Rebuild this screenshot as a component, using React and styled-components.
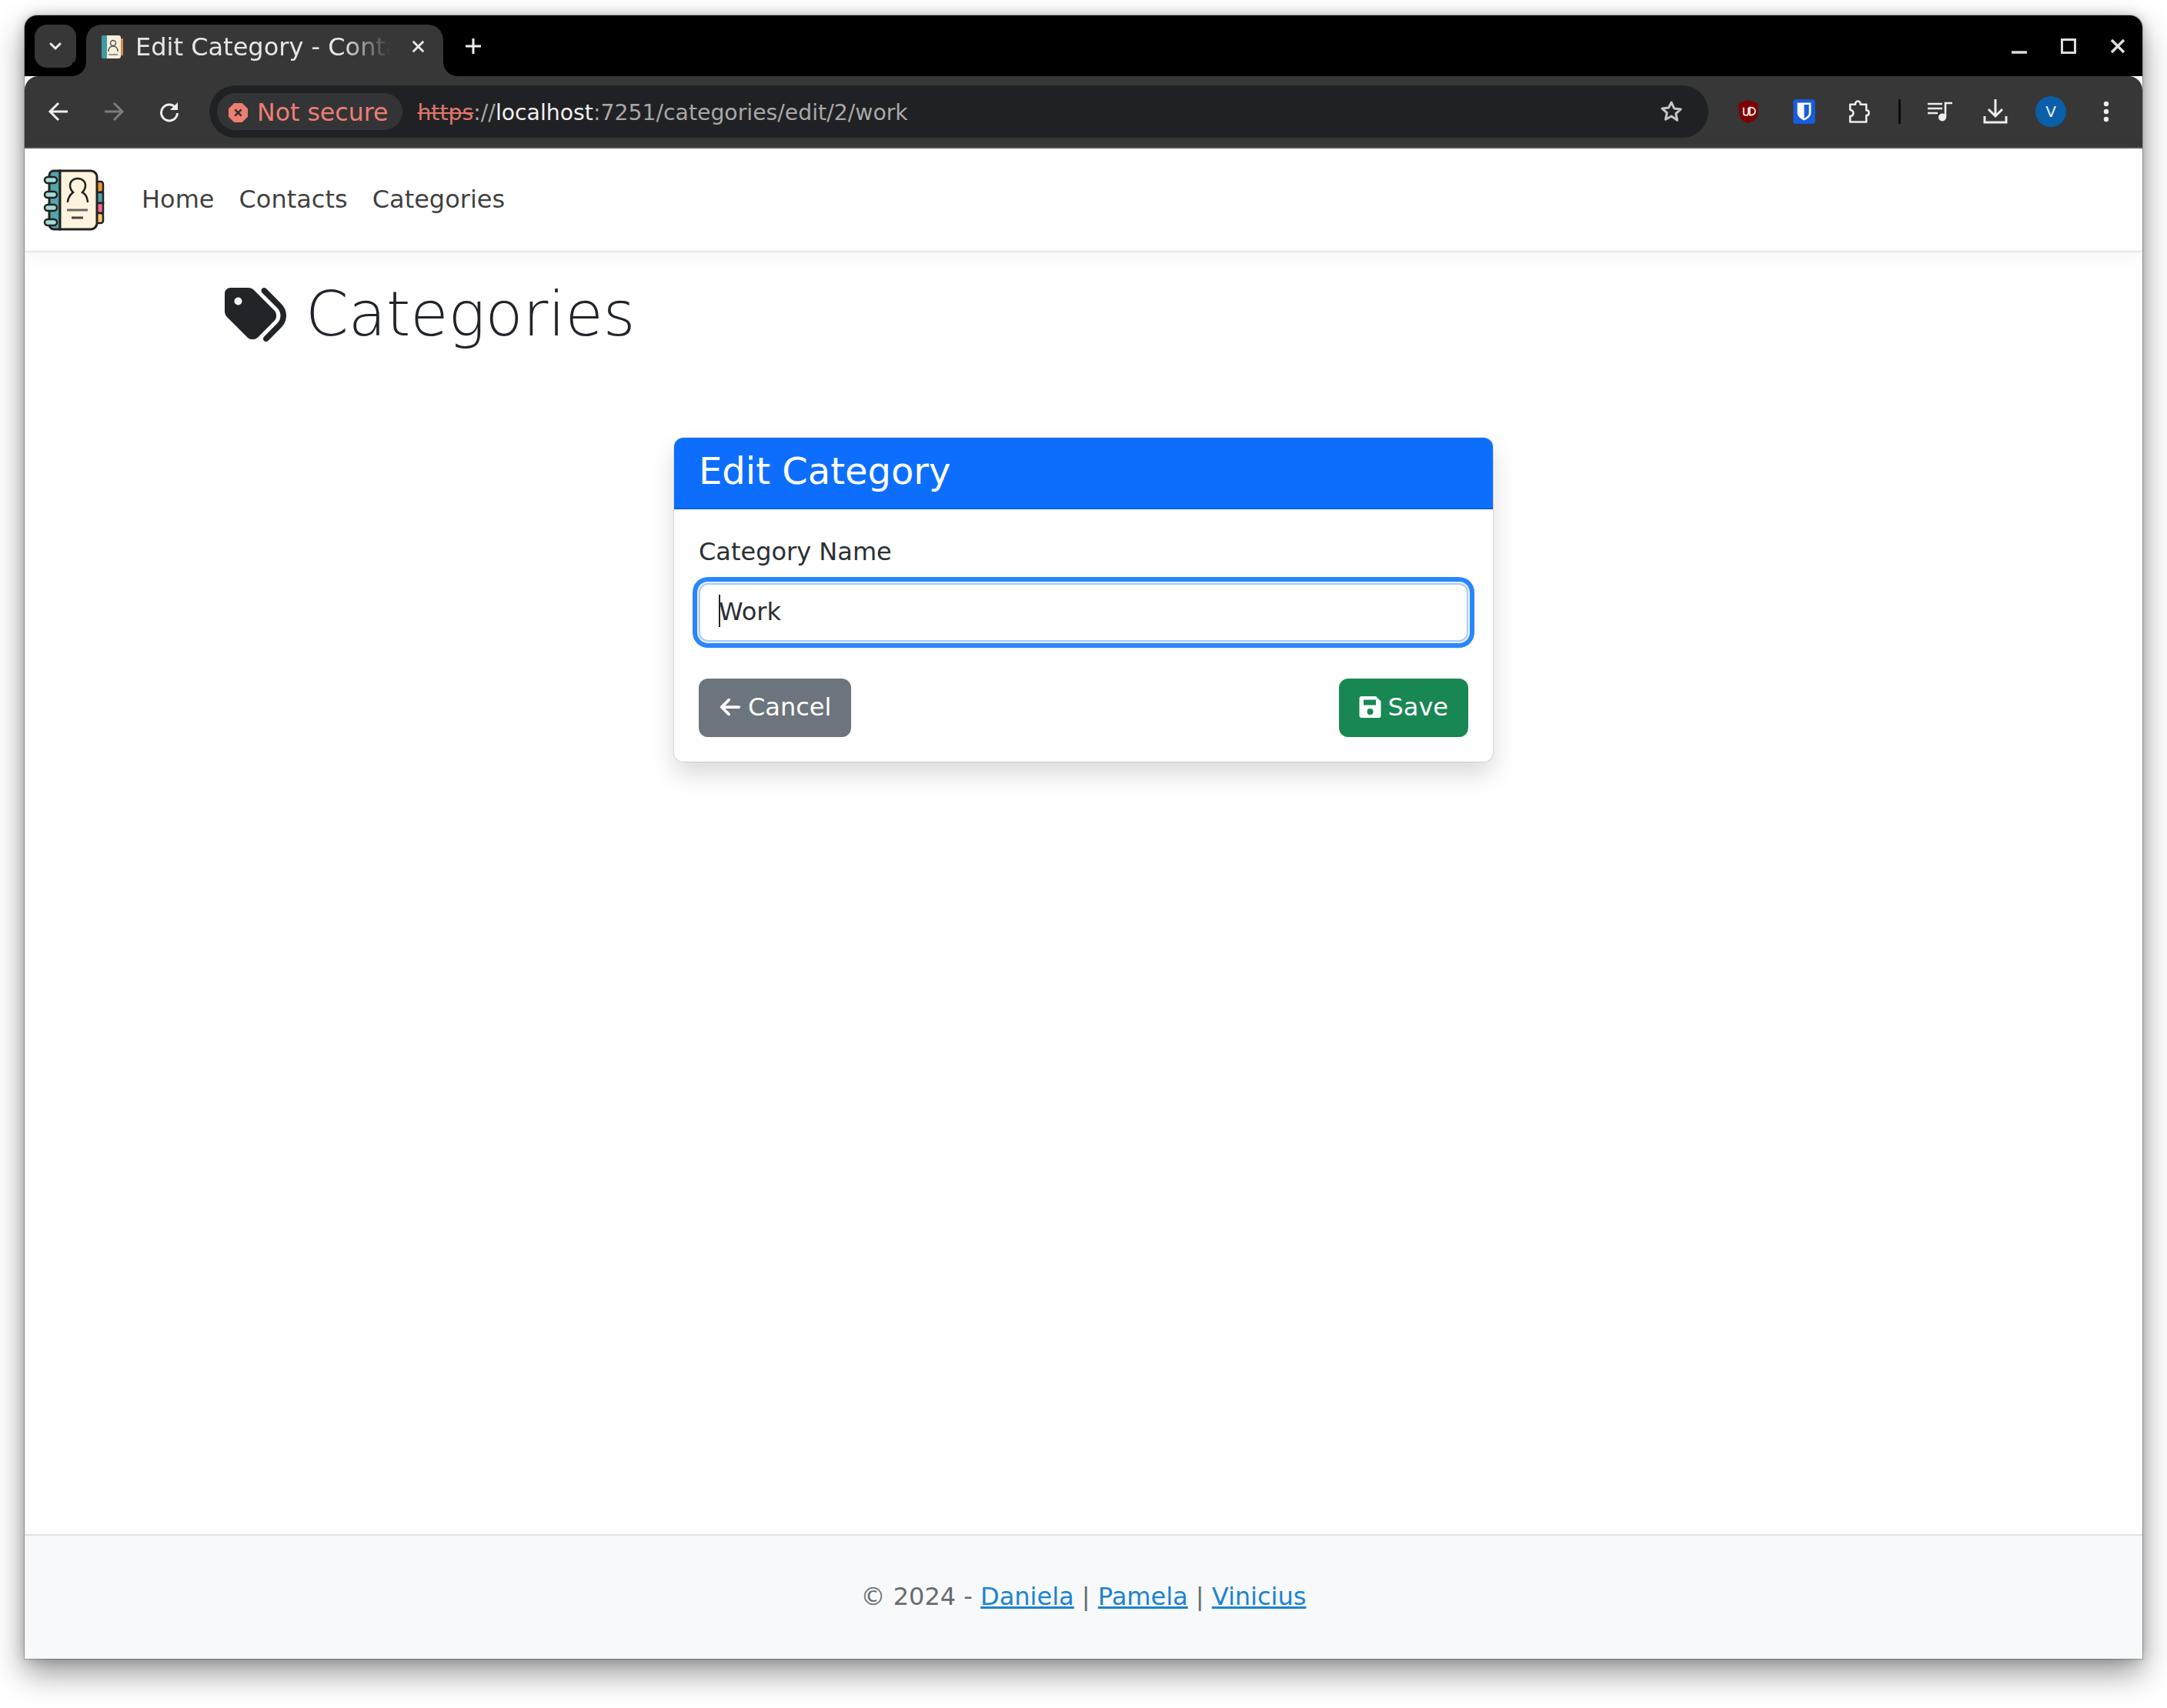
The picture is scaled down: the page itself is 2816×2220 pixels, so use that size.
import React from 'react';
import styled, { createGlobalStyle } from 'styled-components';
import { FaArrowLeft, FaTags } from 'react-icons/fa6';

const GlobalStyle = createGlobalStyle`
  html, body {
    margin: 0;
    padding: 0;
    background: #fff;
  }
  * {
    box-sizing: border-box;
  }
`;

const Desktop = styled.div`
  width: 2816px;
  height: 2220px;
  padding: 20px 32px 64px;
  font-family: "DejaVu Sans", sans-serif;
  background: #fff;
`;

const Window = styled.div`
  height: 100%;
  display: flex;
  flex-direction: column;
  border-radius: 16px 16px 0 0;
  background: #fff;
  box-shadow: 0 0 0 1px rgba(0, 0, 0, 0.22), 0 18px 40px rgba(0, 0, 0, 0.42), 0 0 16px rgba(0, 0, 0, 0.2);
  overflow: hidden;
`;

const TitleBar = styled.div`
  height: 79px;
  flex: none;
  display: flex;
  align-items: flex-start;
  padding: 12px 0 0 13px;
  background: #000;
`;

const TabSearch = styled.div`
  width: 54px;
  height: 56px;
  border-radius: 16px;
  background: #373737;
  display: flex;
  align-items: center;
  justify-content: center;
`;

const Tab = styled.div`
  position: relative;
  width: 464px;
  height: 67px;
  margin-left: 13px;
  padding: 0 24px 10px 18px;
  display: flex;
  align-items: center;
  border-radius: 20px 20px 0 0;
  background: #373737;
  color: #e6e6e6;
  font-size: 32px;

  &::before,
  &::after {
    content: '';
    position: absolute;
    bottom: 0;
    width: 18px;
    height: 18px;
    background: radial-gradient(circle at var(--cx) 0, #000 17.5px, #373737 18px);
  }
  &::before {
    left: -18px;
    --cx: 0;
  }
  &::after {
    right: -18px;
    --cx: 100%;
  }
`;

const TabTitle = styled.span`
  flex: 1;
  min-width: 0;
  margin: 0 13px 0 16px;
  overflow: hidden;
  white-space: nowrap;
  -webkit-mask-image: linear-gradient(to right, #000 78%, transparent 96%);
  mask-image: linear-gradient(to right, #000 78%, transparent 96%);
`;

const NewTab = styled.div`
  margin: 4px 0 0 15px;
  width: 48px;
  height: 48px;
  display: flex;
  align-items: center;
  justify-content: center;
`;

const WindowControls = styled.div`
  margin-left: auto;
  margin-top: 8px;
  padding-right: 12px;
  display: flex;
  gap: 24px;
`;

const Toolbar = styled.div`
  height: 94px;
  flex: none;
  display: flex;
  align-items: center;
  padding: 0 20px 0 24px;
  background: #373737;
  border-radius: 18px 18px 0 0;
  border-bottom: 2px solid #555;
`;

const NavButton = styled.div`
  width: 40px;
  height: 40px;
  margin-right: 32px;
  display: flex;
  align-items: center;
  justify-content: center;
`;

const Omnibox = styled.div`
  width: 1948px;
  height: 68px;
  flex: none;
  padding: 0 33px 0 10px;
  display: flex;
  align-items: center;
  border-radius: 34px;
  background: #202124;
`;

const SecurityChip = styled.div`
  height: 48px;
  padding: 2px 19px 0 15px;
  display: flex;
  align-items: center;
  gap: 12px;
  border-radius: 24px;
  background: #333436;
  color: #ee7d72;
  font-size: 31.6px;
`;

const Url = styled.div`
  margin: 2px 0 0 19px;
  flex: 1;
  font-size: 28.3px;
  color: #a8a8a8;
  white-space: nowrap;
`;

const UrlScheme = styled.span`
  color: #e0766c;
  text-decoration: line-through;
`;

const UrlHost = styled.span`
  color: #f0f0f0;
`;

const ToolIcons = styled.div`
  display: flex;
  align-items: center;
  margin-left: 32px;
  gap: 32px;
`;

const ToolIcon = styled.div`
  width: 40px;
  height: 40px;
  display: flex;
  align-items: center;
  justify-content: center;
`;

const ToolDivider = styled.div`
  width: 3px;
  height: 32px;
  margin: 0 -1px;
  background: #0c0c0c;
`;

const Avatar = styled.div`
  width: 40px;
  height: 40px;
  border-radius: 50%;
  background: #0b5ea8;
  color: #e8eef6;
  font-size: 20px;
  display: flex;
  align-items: center;
  justify-content: center;
`;

const Page = styled.div`
  flex: 1;
  min-height: 0;
  display: flex;
  flex-direction: column;
  background: #fff;
  color: #212529;
`;

const Navbar = styled.nav`
  height: 135px;
  flex: none;
  display: flex;
  align-items: center;
  padding: 0 24px;
  border-bottom: 2px solid #e6e9ec;
  box-shadow: 0 4px 24px rgba(0, 0, 0, 0.05);
`;

const Brand = styled.div`
  width: 80px;
  height: 80px;
  margin-right: 32px;
  flex: none;
`;

const NavLink = styled.a`
  padding: 15px 16px 17px;
  font-size: 32px;
  line-height: 48px;
  color: rgba(0, 0, 0, 0.75);
`;

const Main = styled.main`
  flex: 1;
  min-height: 0;
`;

const PageHeading = styled.h1`
  margin: 0;
  padding: 37px 0 0 260px;
  display: flex;
  align-items: center;
  gap: 25px;
  font-size: 80px;
  line-height: 88px;
  font-weight: 200;
  color: #212529;
`;

const Card = styled.section`
  width: 1064px;
  margin: 116px auto 0;
  border-radius: 12px;
  background: #fff;
  box-shadow: 0 0 0 1px rgba(0, 0, 0, 0.1), 0 16px 32px rgba(0, 0, 0, 0.15);
  overflow: hidden;
`;

const CardHeader = styled.h4`
  margin: 0;
  padding: 15px 32px 19px;
  font-size: 48px;
  line-height: 57px;
  font-weight: 400;
  color: #fff;
  background: #0d6efd;
  border-bottom: 2px solid rgba(0, 0, 0, 0.125);
`;

const CardBody = styled.div`
  padding: 32px;
`;

const FieldLabel = styled.label`
  display: block;
  margin: -1px 0 17px;
  font-size: 32px;
  line-height: 48px;
  color: #2b2f33;
`;

const Input = styled.div`
  position: relative;
  height: 76px;
  padding: 11px 24px 13px;
  font-size: 32px;
  line-height: 48px;
  color: #2b2f33;
  border: 2px solid #a8cbff;
  border-radius: 12px;
  background: #fff;
  box-shadow: 0 0 0 2px #e6f0ff, 0 0 0 8px #2a86fb;
`;

const Caret = styled.span`
  position: absolute;
  left: 24px;
  top: 13px;
  width: 2px;
  height: 42px;
  background: #212529;
`;

const Actions = styled.div`
  display: flex;
  justify-content: space-between;
  margin-top: 48px;
`;

const Button = styled.button`
  height: 76px;
  padding: 11px 24px 13px;
  display: inline-flex;
  align-items: center;
  gap: 8px;
  border: 2px solid ${({ $bg }) => $bg};
  border-radius: 12px;
  background: ${({ $bg }) => $bg};
  color: #fff;
  font-family: inherit;
  font-size: 32px;
  line-height: 48px;
`;

const Footer = styled.footer`
  height: 162px;
  flex: none;
  display: flex;
  align-items: center;
  justify-content: center;
  padding-bottom: 2px;
  border-top: 2px solid #dee2e6;
  background: #f8f9fa;
  color: #686c70;
  font-size: 32px;
`;

const FooterLink = styled.a`
  color: #1b83d6;
  text-decoration: underline;
`;

const ContactBook = () => (
  <svg viewBox="0 0 80 80" width="100%" height="100%">
    <rect x="68" y="16" width="10" height="14" rx="3" fill="#f2963f" stroke="#222" strokeWidth="2.5" />
    <rect x="68" y="30" width="10" height="14" fill="#4fa0a8" stroke="#222" strokeWidth="2.5" />
    <rect x="68" y="44" width="10" height="13" fill="#ef6b8e" stroke="#222" strokeWidth="2.5" />
    <rect x="68" y="57" width="10" height="13" rx="3" fill="#f7c667" stroke="#222" strokeWidth="2.5" />
    <path d="M14 2h8v76h-8a6 6 0 0 1-6-6V8a6 6 0 0 1 6-6z" fill="#55a3ab" stroke="#222" strokeWidth="3" />
    <path d="M22 2h40a8 8 0 0 1 8 8v60a8 8 0 0 1-8 8H22z" fill="#fdf3df" stroke="#222" strokeWidth="3" />
    {[14, 33, 50, 69].map(y => (
      <rect key={y} x="2" y={y - 4} width="16" height="8" rx="4" fill="#a5dcd8" stroke="#222" strokeWidth="2.5" />
    ))}
    <path d="M32 42c1-8 5-10 7-12-3-3-4-6-4-9 0-5 4-9 10-9s10 4 10 9c0 3-1 6-4 9 3 2 6 4 7 12" fill="none" stroke="#222" strokeWidth="2.5" strokeLinecap="round" />
    <path d="M31 53h27" stroke="#666" strokeWidth="3" />
    <path d="M37 63h15" stroke="#444" strokeWidth="3" />
  </svg>
);

const Favicon = () => (
  <svg width="30" height="32" viewBox="0 0 30 32">
    <rect x="7" y="1" width="20" height="30" rx="3" fill="#f7efdd" />
    <rect x="2" y="1" width="7" height="30" rx="2" fill="#3f9aa2" />
    <rect x="27" y="5" width="3" height="22" fill="#d98a4a" />
    <circle cx="17" cy="11" r="3.5" fill="none" stroke="#555" strokeWidth="1.5" />
    <path d="M11 22c0-5 3-7 6-7s6 2 6 7" fill="none" stroke="#555" strokeWidth="1.5" />
    <path d="M11 26h12" stroke="#777" strokeWidth="1.5" />
  </svg>
);

const Chevron = () => (
  <svg width="20" height="14" viewBox="0 0 20 14">
    <path d="M4 4l6 6 6-6" fill="none" stroke="#f0f0f0" strokeWidth="3" strokeLinecap="round" />
  </svg>
);

const CloseGlyph = ({ size = 20, color = '#e6e6e6' }) => (
  <svg width={size} height={size} viewBox="0 0 20 20">
    <path d="M2 2l16 16M18 2L2 18" stroke={color} strokeWidth="3.4" />
  </svg>
);

const Arrow = ({ color = '#eee', flip }) => (
  <svg width="28" height="28" viewBox="0 0 28 28" style={flip ? { transform: 'scaleX(-1)' } : undefined}>
    <path d="M26 14H4M14 3L3 14l11 11" fill="none" stroke={color} strokeWidth="3" />
  </svg>
);

const Reload = () => (
  <svg width="28" height="28" viewBox="0 0 28 28">
    <path d="M23 10a10.5 10.5 0 1 0 1.5 6" fill="none" stroke="#eee" strokeWidth="3" />
    <path d="M25 2v10H15z" fill="#eee" />
  </svg>
);

const StarIcon = () => (
  <svg width="30" height="30" viewBox="0 0 30 30">
    <path d="M15 3l3.6 8 8.6.9-6.4 5.8 1.8 8.5L15 21l-7.6 4.2 1.8-8.5-6.4-5.8 8.6-.9z" fill="none" stroke="#c6c6c6" strokeWidth="3" strokeLinejoin="round" />
  </svg>
);

const UblockIcon = () => (
  <svg width="28" height="32" viewBox="0 0 30 36">
    <path d="M15 1l14 5v14c0 8-7 13-14 15C8 33 1 28 1 20V6z" fill="#800000" />
    <path d="M8 12v8a3.5 3.5 0 0 0 7 0v-8M17 12v11h2.5a5.5 5.5 0 0 0 0-11z" fill="none" stroke="#f2e4e4" strokeWidth="2.2" />
  </svg>
);

const BitwardenIcon = () => (
  <svg width="31" height="32" viewBox="0 0 32 36">
    <rect width="32" height="36" rx="4" fill="#175ddc" />
    <path d="M6 5h20v15c0 5-5 9-10 11C11 29 6 25 6 20z" fill="#fff" />
    <path d="M16 8h7v12c0 3-3 6-7 8z" fill="#175ddc" />
  </svg>
);

const PuzzleIcon = () => (
  <svg width="34" height="32" viewBox="0 0 34 38">
    <path d="M3 8h8c0-2 1-5 4-5s4 3 4 5h9v9c2 0 4 1 4 4s-2 4-4 4v10H3V26c3 0 5-2 5-5s-2-4-5-5z" fill="none" stroke="#eee" strokeWidth="3" strokeLinejoin="round" />
  </svg>
);

const MediaIcon = () => (
  <svg width="32" height="26" viewBox="0 0 32 26">
    <path d="M0 3h19M0 9h19M0 15h13" stroke="#eee" strokeWidth="2.6" />
    <path d="M23 20V2h9" fill="none" stroke="#eee" strokeWidth="2.6" />
    <circle cx="19" cy="20.5" r="5" fill="#eee" />
  </svg>
);

const DownloadIcon = () => (
  <svg width="32" height="32" viewBox="0 0 32 32">
    <path d="M16 0v21M7 13l9 9 9-9" fill="none" stroke="#eee" strokeWidth="3" />
    <path d="M2 22v8h28v-8" fill="none" stroke="#eee" strokeWidth="3" />
  </svg>
);

const MenuDots = () => (
  <svg width="8" height="28" viewBox="0 0 8 28">
    <circle cx="4" cy="4" r="3.2" fill="#eee" />
    <circle cx="4" cy="14" r="3.2" fill="#eee" />
    <circle cx="4" cy="24" r="3.2" fill="#eee" />
  </svg>
);

const FloppyIcon = () => (
  <svg width="29" height="28" viewBox="0 0 28 28">
    <path
      fillRule="evenodd"
      fill="#fff"
      d="M3 0h18.5L28 6.5V25a3 3 0 0 1-3 3H3a3 3 0 0 1-3-3V3a3 3 0 0 1 3-3zM5.5 4.5v7h16v-7zM14 16a4 4 0 1 0 0 8 4 4 0 0 0 0-8z"
    />
  </svg>
);

const App = () => (
  <>
    <GlobalStyle />
    <Desktop>
      <Window>
        <TitleBar>
          <TabSearch>
            <Chevron />
          </TabSearch>
          <Tab>
            <Favicon />
            <TabTitle>Edit Category - Contacts</TabTitle>
            <CloseGlyph size={17} />
          </Tab>
          <NewTab>
            <svg width="20" height="20" viewBox="0 0 20 20">
              <path d="M10 0v20M0 10h20" stroke="#f0f0f0" strokeWidth="3" />
            </svg>
          </NewTab>
          <WindowControls>
            <ToolIcon>
              <svg width="20" height="20" viewBox="0 0 20 20">
                <path d="M0 18h20" stroke="#ddd" strokeWidth="3.5" />
              </svg>
            </ToolIcon>
            <ToolIcon>
              <svg width="20" height="20" viewBox="0 0 20 20">
                <rect x="1.5" y="1.5" width="17" height="17" fill="none" stroke="#ddd" strokeWidth="3" />
              </svg>
            </ToolIcon>
            <ToolIcon>
              <CloseGlyph size={20} color="#ddd" />
            </ToolIcon>
          </WindowControls>
        </TitleBar>
        <Toolbar>
          <NavButton>
            <Arrow />
          </NavButton>
          <NavButton>
            <Arrow flip color="#7c7c7c" />
          </NavButton>
          <NavButton>
            <Reload />
          </NavButton>
          <Omnibox>
            <SecurityChip>
              <svg width="25" height="25" viewBox="0 0 24 24">
                <path d="M7 0h10l7 7v10l-7 7H7l-7-7V7z" fill="#ee7d72" />
                <path d="M8 8l8 8M16 8l-8 8" stroke="#333" strokeWidth="2.5" />
              </svg>
              Not secure
            </SecurityChip>
            <Url>
              <UrlScheme>https</UrlScheme>://<UrlHost>localhost</UrlHost>:7251/categories/edit/2/work
            </Url>
            <StarIcon />
          </Omnibox>
          <ToolIcons>
            <ToolIcon>
              <UblockIcon />
            </ToolIcon>
            <ToolIcon>
              <BitwardenIcon />
            </ToolIcon>
            <ToolIcon>
              <PuzzleIcon />
            </ToolIcon>
            <ToolDivider />
            <ToolIcon>
              <MediaIcon />
            </ToolIcon>
            <ToolIcon>
              <DownloadIcon />
            </ToolIcon>
            <Avatar>V</Avatar>
            <ToolIcon>
              <MenuDots />
            </ToolIcon>
          </ToolIcons>
        </Toolbar>
        <Page>
          <Navbar>
            <Brand>
              <ContactBook />
            </Brand>
            <NavLink>Home</NavLink>
            <NavLink>Contacts</NavLink>
            <NavLink>Categories</NavLink>
          </Navbar>
          <Main>
            <PageHeading>
              <FaTags size={80} />
              Categories
            </PageHeading>
            <Card>
              <CardHeader>Edit Category</CardHeader>
              <CardBody>
                <FieldLabel>Category Name</FieldLabel>
                <Input>
                  <Caret />
                  Work
                </Input>
                <Actions>
                  <Button $bg="#6c757d">
                    <FaArrowLeft size={30} />
                    Cancel
                  </Button>
                  <Button $bg="#198754">
                    <FloppyIcon />
                    Save
                  </Button>
                </Actions>
              </CardBody>
            </Card>
          </Main>
          <Footer>
            <span>
              © 2024 - <FooterLink>Daniela</FooterLink> | <FooterLink>Pamela</FooterLink> | <FooterLink>Vinicius</FooterLink>
            </span>
          </Footer>
        </Page>
      </Window>
    </Desktop>
  </>
);

export default App;
